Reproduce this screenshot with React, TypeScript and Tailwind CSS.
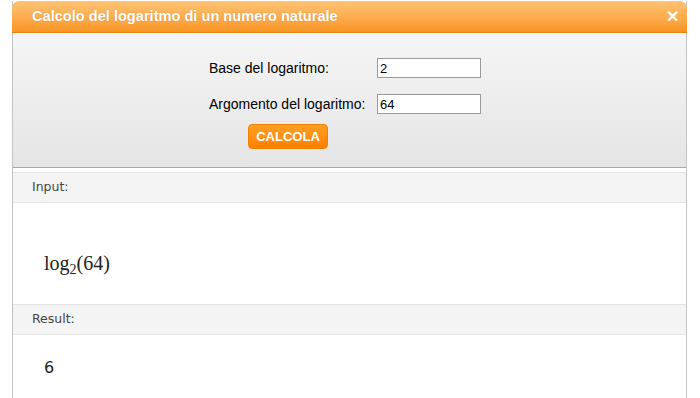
export default function App() {
  return (
    <div className="h-[398px] w-[700px] overflow-hidden bg-white pl-[12px] pr-[13px] pt-[1px]">
      <div className="flex h-full flex-col border-x border-[#c4c4c4]">
        {/* title bar */}
        <div className="-mx-px flex h-[32px] items-center justify-between rounded-t-[7px] border-b border-[#e3850f] bg-gradient-to-b from-[#ffc473] to-[#f8951e] pl-[20px] pr-[8px]">
          <span className="font-['Liberation_Sans',Arial,sans-serif] text-[14.6px] font-bold text-white [text-shadow:0_0_1px_rgba(160,80,0,0.4)]">
            Calcolo del logaritmo di un numero naturale
          </span>
          <span className="font-['Liberation_Sans',Arial,sans-serif] text-[16px] font-bold leading-none text-white">
            ✕
          </span>
        </div>

        {/* form */}
        <div className="flex h-[135px] flex-col border-b border-[#a9a9a9] bg-gradient-to-b from-[#f5f5f5] to-[#e5e5e5] pl-[196px] pt-[25px] font-['Liberation_Sans',Arial,sans-serif] text-[14px] text-black">
          <div className="grid w-[272px] grid-cols-[168px_104px] gap-y-[16px]">
            <div className="flex h-[20px] items-center">Base del logaritmo:</div>
            <input
              defaultValue="2"
              className="h-[20px] w-[104px] border border-[#9a9a9a] bg-white px-[2px] text-[13px] outline-none"
            />
            <div className="flex h-[20px] items-center">Argomento del logaritmo:</div>
            <input
              defaultValue="64"
              className="h-[20px] w-[104px] border border-[#9a9a9a] bg-white px-[2px] text-[13px] outline-none"
            />
          </div>
          <div className="mt-[10px] pl-[39px]">
            <button className="h-[25px] w-[80px] rounded-[4px] border border-[#f08000] bg-gradient-to-b from-[#ffa020] to-[#ff8000] text-[13px] font-bold text-white">
              CALCOLA
            </button>
          </div>
        </div>

        <div className="h-[4px] bg-white" />

        {/* input section */}
        <div className="flex h-[31px] items-center border-y border-[#e4e4e4] bg-[#f4f4f4] pl-[19px] font-['DejaVu_Sans',Verdana,sans-serif] text-[12.5px] text-[#444]">
          Input:
        </div>
        <div className="flex h-[101px] items-end pb-[26px] pl-[31px] font-['Liberation_Serif','Times_New_Roman',serif] text-[20px] text-[#222]">
          <span>
            log<sub className="text-[14px]">2</sub>(64)
          </span>
        </div>

        {/* result section */}
        <div className="flex h-[31px] items-center border-y border-[#e4e4e4] bg-[#f4f4f4] pl-[19px] font-['DejaVu_Sans',Verdana,sans-serif] text-[12.5px] text-[#444]">
          Result:
        </div>
        <div className="pl-[31px] pt-[21px] font-['DejaVu_Sans',Verdana,sans-serif] text-[16px] text-[#222]">
          6
        </div>
      </div>
    </div>
  );
}
